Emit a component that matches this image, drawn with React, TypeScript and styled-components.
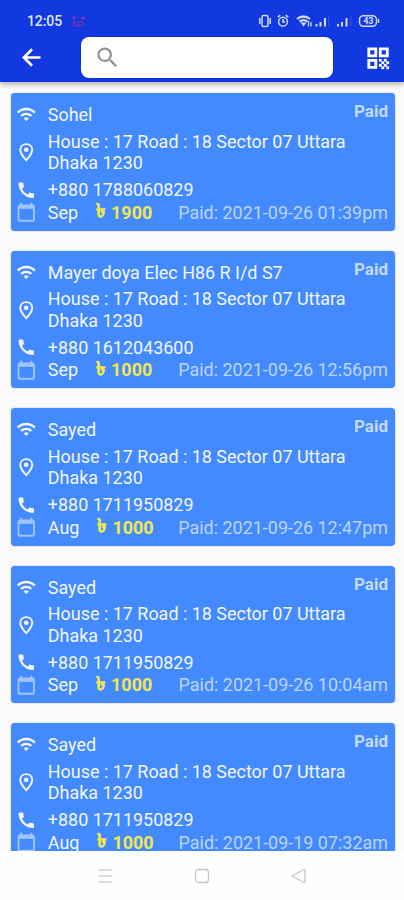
import React from "react";
import styled, { createGlobalStyle } from "styled-components";
import { MdCall, MdSearch, MdWifi } from "react-icons/md";

const GlobalStyle = createGlobalStyle`
  * { box-sizing: border-box; }
  body { margin: 0; background: #fdfdfd; font-family: Roboto, "Noto Sans", sans-serif; }
  svg { display: block; flex: none; }
`;

const Screen = styled.div`
  width: 404px;
  height: 900px;
  display: flex;
  flex-direction: column;
  overflow: hidden;
  background: #fafafa;
`;

const Header = styled.header`
  flex: none;
  height: 82px;
  background: #1239e0;
  box-shadow: 0 2px 5px rgba(0, 0, 0, 0.32);
  z-index: 1;
`;

const StatusBar = styled.div`
  height: 37px;
  padding: 4px 23px 0 27px;
  display: flex;
  align-items: center;
  color: #dfe6ff;
`;

const Clock = styled.span`
  width: 45px;
  font-size: 14px;
  line-height: 16px;
  font-weight: 500;
  letter-spacing: -0.1px;
`;

const StatusIcons = styled.div`
  margin-left: auto;
  display: flex;
  align-items: center;
`;

const Toolbar = styled.div`
  height: 41px;
  padding: 0 12px 0 18px;
  display: flex;
  align-items: center;
  color: #fff;
`;

const SearchBox = styled.div`
  width: 252px;
  height: 41px;
  margin: 0 31px 0 36px;
  padding-left: 13px;
  display: flex;
  align-items: center;
  border-radius: 8px;
  background: #fff;
  box-shadow: 0 0 2px #0a1fb8;
  color: #929292;
`;

const List = styled.main`
  flex: 1;
  min-height: 0;
  overflow: hidden;
  padding: 11px 9.5px 0 10.5px;
`;

const Card = styled.article`
  height: 137.5px;
  margin-bottom: 20px;
  padding: 11px 6.5px 0 5px;
  border-radius: 4px;
  background: #448aff;
  box-shadow: 0 0 1.5px rgba(40, 90, 190, 0.5);
  color: #f1f6ff;
  font-size: 17.95px;
  line-height: 21.4px;
`;

const Row = styled.div<{ $gap?: number }>`
  display: grid;
  grid-template-columns: 32.3px 1fr auto;
  align-items: center;
  margin-top: ${(p) => p.$gap ?? 0}px;
`;

const Line = styled.span`
  white-space: nowrap;
`;

const Address = styled.span`
  white-space: pre-line;
`;

const Badge = styled.span`
  align-self: start;
  margin-top: -2.8px;
  font-size: 17px;
  font-weight: 700;
  color: #c3dafe;
`;

const FadedIcon = styled.span`
  color: #9fc4ff;
`;

const Payment = styled.div`
  display: flex;
  align-items: center;
`;

const Amount = styled.span`
  display: flex;
  align-items: center;
  gap: 6px;
  margin-left: 18px;
  height: 21.4px;
  font-weight: 700;
  color: #f1e74e;
`;

const Taka = styled.span`
  font-size: 19px;
  line-height: 20px;
  margin-top: -2px;
  -webkit-text-stroke: 0.25px #f1e74e;
`;

const PaidAt = styled.span`
  color: #bbd5ff;
`;

const NavBar = styled.nav`
  flex: none;
  height: 49px;
  padding: 0 97px;
  display: flex;
  align-items: center;
  justify-content: space-between;
  background: #fefefe;
`;

interface Payer {
  name: string;
  phone: string;
  month: string;
  amount: number;
  paidAt: string;
}

const payers: Payer[] = [
  { name: "Sohel", phone: "+880 1788060829", month: "Sep", amount: 1900, paidAt: "2021-09-26 01:39pm" },
  { name: "Mayer doya Elec H86 R I/d S7", phone: "+880 1612043600", month: "Sep", amount: 1000, paidAt: "2021-09-26 12:56pm" },
  { name: "Sayed", phone: "+880 1711950829", month: "Aug", amount: 1000, paidAt: "2021-09-26 12:47pm" },
  { name: "Sayed", phone: "+880 1711950829", month: "Sep", amount: 1000, paidAt: "2021-09-26 10:04am" },
  { name: "Sayed", phone: "+880 1711950829", month: "Aug", amount: 1000, paidAt: "2021-09-19 07:32am" },
];

const address = "House : 17 Road : 18 Sector 07 Uttara\nDhaka 1230";

const NotificationIcon = () => (
  <svg width="13" height="12" viewBox="0 0 13 12" fill="none" stroke="#a42a9a" strokeWidth="1.2">
    <path d="M1.5 1v4M11.5 1v4M1.5 1.5l2.5 2M11.5 1.5l-2.5 2M1.5 7q0 4 3.500 4h3q3.500 0 3.500-4" />
    <path d="M4 6.500h1.500M7.500 6.500h1.500M5.500 9h2" stroke="#d02370" />
  </svg>
);

const StatusGlyphs = () => (
  <svg width="122" height="14" viewBox="0 0 122 14" fill="none" stroke="#cfdaff" strokeWidth="1.5">
    <rect x="3" y="1.5" width="6" height="11" rx="1.5" />
    <path d="M.8 4v6M11.2 4v6" />
    <circle cx="24" cy="7.7" r="4.4" />
    <path d="M24 5v3h2M18.8 3.2l2.4-2M29.2 3.2l-2.4-2" />
    <path d="M38 5q6.500-5 13 0M40.500 7.600q4-3 8 0" strokeWidth="2.2" />
    <path d="M41.500 8.500h6l-3 4zM56.500 10h2v2.500h-2zM60.500 8h2v4.500h-2zM65 4h2v8.500h-2zM78 10h2v2.500h-2zM82 8h2v4.500h-2zM86.500 4h2v8.500h-2z" fill="#cfdaff" stroke="none" />
    <path d="M49.500 7v5.500M52 8v4.500" strokeWidth="1.3" />
    <path d="M69.500 2v10M92 2v10" stroke="#3352e4" strokeWidth="1" />
    <rect x="100.5" y="1.7" width="17" height="10.6" rx="4" />
    <path d="M119.500 5v4" />
    <text x="104.2" y="10.3" fill="#cfdaff" stroke="none" fontSize="9" fontWeight="700">43</text>
  </svg>
);

const BackIcon = () => (
  <svg width="27" height="27" viewBox="0 0 24 24" fill="none" stroke="currentColor" strokeWidth="2.3">
    <path d="M20 12H5.500M12.500 4.700 5.200 12l7.300 7.300" />
  </svg>
);

const QrIcon = () => (
  <svg width="28" height="28" viewBox="0 0 28 28" fill="none" stroke="currentColor" strokeWidth="2.8">
    <path d="M4.800 4.800h7v7h-7zM16.300 4.800h7v7h-7zM4.800 16.300h7v7h-7z" />
    <path
      d="M15 15h2.500v2.500H15zM20 15h2.500v2.500H20zM17.500 17.500H20V20h-2.500zM22.500 17.500H25V20h-2.500zM15 20h2.500v2.500H15zM20 20h2.500v2.500H20zM17.500 22.500H20V25h-2.500zM22.500 22.500H25V25h-2.500z"
      fill="currentColor"
      stroke="currentColor"
      strokeWidth="0.3"
    />
  </svg>
);

const PlaceIcon = () => (
  <svg width="20.5" height="20.5" viewBox="0 0 24 24" fill="none" stroke="currentColor" strokeWidth="2.3">
    <path d="M12 2.500C7.600 2.500 5 5.600 5 9c0 4.600 7 12.300 7 12.300S19 13.600 19 9c0-3.400-2.600-6.500-7-6.500z" />
    <circle cx="12" cy="9" r="2.700" fill="currentColor" stroke="none" />
  </svg>
);

const CalendarIcon = () => (
  <svg width="20.5" height="20.5" viewBox="0 0 24 24" fill="none" stroke="currentColor" strokeWidth="2.2">
    <rect x="3" y="4" width="18" height="18" rx="1.5" />
    <path d="M3 6h18" strokeWidth="4" />
    <path d="M6 1v3M18 1v3" />
  </svg>
);

const PayerCard = ({ payer }: { payer: Payer }) => (
  <Card>
    <Row>
      <MdWifi size={20.5} />
      <Line>{payer.name}</Line>
      <Badge>Paid</Badge>
    </Row>
    <Row $gap={5.5}>
      <PlaceIcon />
      <Address>{address}</Address>
    </Row>
    <Row $gap={5.5}>
      <MdCall size={20.5} />
      <Line>{payer.phone}</Line>
    </Row>
    <Row $gap={1}>
      <FadedIcon>
        <CalendarIcon />
      </FadedIcon>
      <Payment>
        <Line>{payer.month}</Line>
        <Amount>
          <Taka>৳</Taka>
          <Line>{payer.amount}</Line>
        </Amount>
      </Payment>
      <PaidAt>Paid: {payer.paidAt}</PaidAt>
    </Row>
  </Card>
);

export default function App() {
  return (
    <>
      <GlobalStyle />
      <Screen>
        <Header>
          <StatusBar>
            <Clock>12:05</Clock>
            <NotificationIcon />
            <StatusIcons>
              <StatusGlyphs />
            </StatusIcons>
          </StatusBar>
          <Toolbar>
            <BackIcon />
            <SearchBox>
              <MdSearch size={27} />
            </SearchBox>
            <QrIcon />
          </Toolbar>
        </Header>
        <List>
          {payers.map((payer, i) => (
            <PayerCard key={i} payer={payer} />
          ))}
        </List>
        <NavBar>
          <svg width="17" height="16" viewBox="0 0 17 16" stroke="#d2d2d2" strokeWidth="1.6">
            <path d="M1.500 2h14M1.500 8h14M1.500 14h14" />
          </svg>
          <svg width="16" height="16" viewBox="0 0 16 16" fill="none" stroke="#c6c6c6" strokeWidth="1.3">
            <rect x="1.5" y="1.5" width="13" height="13" rx="3" />
          </svg>
          <svg width="17" height="16" viewBox="0 0 17 16" fill="none" stroke="#c6c6c6" strokeWidth="1.3">
            <path d="M14 1.500 2 8l12 6.500q1 .2 1-1V2.500q0-1.200-1-1z" />
          </svg>
        </NavBar>
      </Screen>
    </>
  );
}
